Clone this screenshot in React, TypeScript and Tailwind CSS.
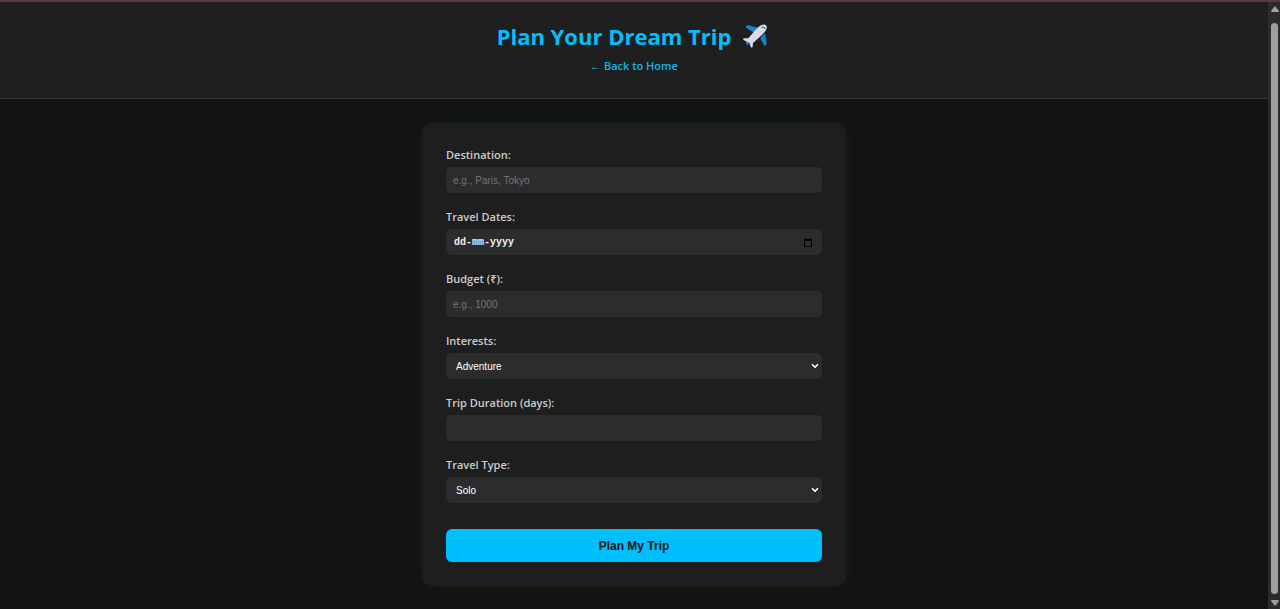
import type { ReactNode } from "react";
import { ChevronDown } from "lucide-react";

const fieldClass =
  "block h-[26px] w-full rounded-[5px] bg-[#2c2c2c] px-[7px] font-['Liberation_Sans',sans-serif] text-[10px] text-white outline-none placeholder:text-[#757575] focus:ring-1 focus:ring-[#00bfff]";

function Plane() {
  return (
    <svg viewBox="30 33 72 72" className="size-6" aria-hidden="true">
      <path d="M39 41 Q42 36 47 37 L76 44 L64 60 L42 46 Q38 44 39 41Z" fill="#1784c9" />
      <path d="M82 76 L96 60 L101 90 Q101 96 96 98 Q93 99 92 95Z" fill="#1784c9" />
      <path d="M38 88 L48 80 L50 90 L42 97Z" fill="#1784c9" />
      <path
        d="M84 37 Q92 32 98 36 Q104 41 99 51 Q96 57 86 67 L60 90 L59 101 Q56 106 53 101 L49 89 L33 82 Q28 78 33 76 L46 76 L68 50 Q78 40 84 37Z"
        fill="#dcd8e8"
      />
      <path d="M87 43 Q92 41 95 46" fill="none" stroke="#1784c9" strokeWidth="4" strokeLinecap="round" />
    </svg>
  );
}

function Field({ id, label, children }: { id: string; label: string; children: ReactNode }) {
  return (
    <div className="flex flex-col gap-1">
      <label htmlFor={id} className="text-[11px] leading-4 font-semibold text-[#cccccc]">
        {label}
      </label>
      {children}
    </div>
  );
}

function Select({ id, options }: { id: string; options: string[] }) {
  return (
    <div className="relative">
      <select id={id} className={`${fieldClass} appearance-none pl-[10px]`}>
        {options.map((option) => (
          <option key={option}>{option}</option>
        ))}
      </select>
      <ChevronDown
        aria-hidden="true"
        strokeWidth={4}
        className="pointer-events-none absolute top-2 right-0.5 size-[10px] text-white"
      />
    </div>
  );
}

function ScrollRail() {
  return (
    <div aria-hidden="true" className="flex w-3 shrink-0 flex-col items-center bg-[#2b2b2b] pt-1 pl-px">
      <svg viewBox="0 0 8 6" className="h-[6px] w-2">
        <path d="M4 0 L8 5 Q8 6 7 6 H1 Q0 6 0 5Z" fill="#9f9f9f" />
      </svg>
      <div className="mt-[11px] mb-[6px] w-[7px] flex-1 rounded-full bg-[#9f9f9f]" />
      <svg viewBox="0 0 8 6" className="mb-[3px] h-[6px] w-2">
        <path d="M4 6 L8 1 Q8 0 7 0 H1 Q0 0 0 1Z" fill="#9f9f9f" />
      </svg>
    </div>
  );
}

export default function App() {
  return (
    <div className="flex min-h-screen flex-col border-t-2 border-[#5a3a3b] bg-[#121212] font-['Open_Sans','Noto_Sans',sans-serif]">
      <div className="flex flex-1">
        <div className="min-w-0 flex-1 pb-[23px]">
          <header className="flex flex-col items-center border-b border-[#333333] bg-[#1f1f1f] pt-5 pb-6">
            <h1 className="flex items-center gap-3 pr-1 text-[22px] leading-7 font-bold text-[#00bfff]">
              Plan Your Dream Trip
              <Plane />
            </h1>
            <a href="#home" className="mt-2 text-[11px] leading-4 font-semibold text-[#11b4f0]">
              ← Back to Home
            </a>
          </header>
          <main className="px-4 pt-6">
            <form
              onSubmit={(event) => event.preventDefault()}
              className="mx-auto flex w-full max-w-[424px] flex-col gap-4 rounded-[10px] bg-[#1e1e1e] p-6 shadow-[0_0_12px_rgba(0,191,255,0.08)]"
            >
              <Field id="destination" label="Destination:">
                <input id="destination" type="text" placeholder="e.g., Paris, Tokyo" className={fieldClass} />
              </Field>
              <Field id="dates" label="Travel Dates:">
                <div className="relative">
                  <input
                    id="dates"
                    type="text"
                    placeholder="dd-mm-yyyy"
                    className="block h-[26px] w-full rounded-[5px] bg-[#2c2c2c] px-2 font-['Liberation_Mono',monospace] text-[10px] font-bold text-white outline-none placeholder:text-[#eeeeee] focus:ring-1 focus:ring-[#00bfff]"
                  />
                  <button type="button" aria-label="Open calendar" className="absolute top-2 right-2 size-3">
                    <svg viewBox="0 0 12 12" className="size-3">
                      <path
                        d="M3 1h1v1h4V1h1v1h1v8H2V2h1zM3 4v5h6V4z"
                        fill="#050505"
                        fillRule="evenodd"
                      />
                    </svg>
                  </button>
                </div>
              </Field>
              <Field id="budget" label="Budget (₹):">
                <input id="budget" type="text" inputMode="numeric" placeholder="e.g., 1000" className={fieldClass} />
              </Field>
              <Field id="interests" label="Interests:">
                <Select id="interests" options={["Adventure", "Culture", "Food", "Nature"]} />
              </Field>
              <Field id="duration" label="Trip Duration (days):">
                <input id="duration" type="text" inputMode="numeric" className={fieldClass} />
              </Field>
              <Field id="type" label="Travel Type:">
                <Select id="type" options={["Solo", "Couple", "Family", "Friends"]} />
              </Field>
              <button
                type="submit"
                className="mt-[10px] h-[33px] rounded-md bg-[#00bfff] font-['Liberation_Sans',sans-serif] text-xs font-bold text-[#121212]"
              >
                Plan My Trip
              </button>
            </form>
          </main>
        </div>
        <ScrollRail />
      </div>
    </div>
  );
}
